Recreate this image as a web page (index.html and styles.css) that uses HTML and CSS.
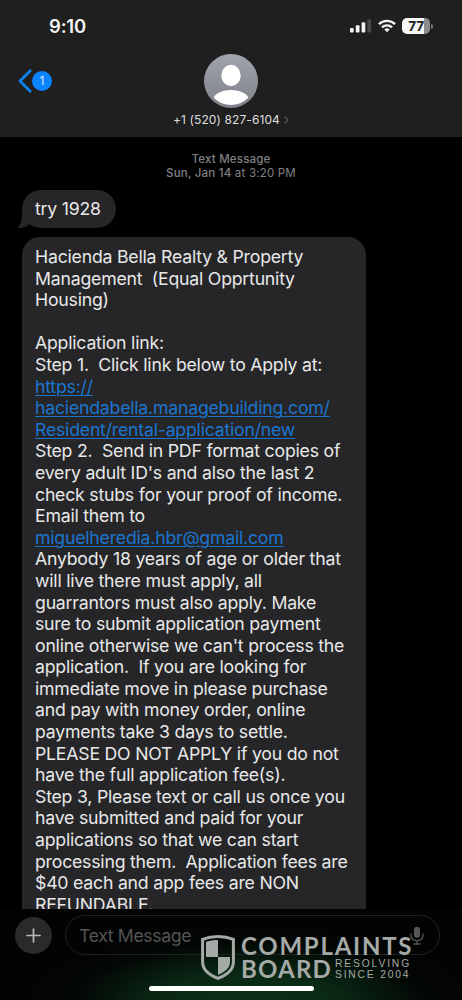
FILE: index.html
```html
<!DOCTYPE html>
<html lang="en">
<head>
<meta charset="utf-8">
<title>Messages</title>
<link rel="stylesheet" href="styles.css">
</head>
<body>
<main class="phone">
  <header class="header">
    <div class="status">
      <span class="time">9:10</span>
      <div class="indicators">
        <svg class="signal" width="21" height="14" viewBox="0 0 21 14"><rect x="0" y="9" width="3.7" height="4.6" rx="1" fill="#f4f4f4"/><rect x="5.8" y="6.2" width="3.7" height="7.4" rx="1" fill="#f4f4f4"/><rect x="11.6" y="3.2" width="3.7" height="10.4" rx="1" fill="#f4f4f4"/><rect x="17.3" y="0.3" width="3.7" height="13.3" rx="1" fill="#484848"/></svg>
        <svg class="wifi" width="18" height="14" viewBox="0 0 19 14" fill="none" stroke="#f4f4f4" stroke-width="2.5"><path d="M1 5.1a12.1 12.1 0 0 1 17 0"/><path d="M4.2 8.5a7.5 7.5 0 0 1 10.6 0"/><path d="M9.5 13.6 6.7 10.7a4 4 0 0 1 5.6 0z" fill="#f4f4f4" stroke="none"/></svg>
        <div class="battery"><span>77</span></div>
        <i class="battery-tip"></i>
      </div>
    </div>
    <div class="contact">
      <div class="back">
        <svg width="14" height="24" viewBox="0 0 14 24" fill="none" stroke="#0d80f2" stroke-width="2.7" stroke-linecap="round" stroke-linejoin="round"><path d="M12.2 1.8 2 12l10.2 10.2"/></svg>
        <span class="badge">1</span>
      </div>
      <div class="person">
        <svg width="54" height="54" viewBox="0 0 54 54"><defs><linearGradient id="g" x1="0" y1="0" x2="0" y2="1"><stop offset="0" stop-color="#a1a3ad"/><stop offset="1" stop-color="#808289"/></linearGradient><clipPath id="c"><circle cx="27" cy="27" r="24"/></clipPath></defs><circle cx="27" cy="27" r="27" fill="url(#g)"/><ellipse cx="27" cy="21.5" rx="9.7" ry="10.7" fill="#fff"/><ellipse cx="27" cy="46" rx="18" ry="10" fill="#fff" clip-path="url(#c)"/></svg>
        <div class="number">+1 (520) 827-6104<svg width="5" height="8" viewBox="0 0 5 8" fill="none" stroke="#606063" stroke-width="1.2"><path d="m.8.6 3.3 3.4L.8 7.4"/></svg></div>
      </div>
    </div>
  </header>
  <section class="thread">
    <div class="stamp"><b>Text Message</b><br><b>Sun, Jan 14</b> at 3:20 PM</div>
    <div class="bubble short">try 1928<svg class="tail" width="18" height="16" viewBox="0 0 18 16"><path d="M5 0C5 8 4 12 0 14.8c5 .7 9-1 12-3.4L18 6z" fill="#262628"/></svg></div>
    <div class="bubble long">Hacienda Bella Realty &amp; Property
Management  (Equal Opprtunity
Housing)

Application link:
Step 1.  Click link below to Apply at:
<a>https://
haciendabella.managebuilding.com/
Resident/rental-application/new</a>
Step 2.  Send in PDF format copies of
every adult ID's and also the last 2
check stubs for your proof of income.
Email them to
<a>miguelheredia.hbr@gmail.com</a>
Anybody 18 years of age or older that
will live there must apply, all
guarrantors must also apply. Make
sure to submit application payment
online otherwise we can't process the
application.  If you are looking for
immediate move in please purchase
and pay with money order, online
payments take 3 days to settle.
PLEASE DO NOT APPLY if you do not
have the full application fee(s).
Step 3, Please text or call us once you
have submitted and paid for your
applications so that we can start
processing them.  Application fees are
$40 each and app fees are NON
REFUNDABLE.</div>
  </section>
  <footer class="composer">
    <div class="row">
      <div class="plus"><svg width="15" height="15" viewBox="0 0 15 15" stroke="#b8b8ba" stroke-width="1.7" stroke-linecap="round"><path d="M7.5 1v13M1 7.5h13"/></svg></div>
      <div class="field"><span>Text Message</span>
        <svg width="14" height="19" viewBox="0 0 14 19" fill="none" stroke="#555657" stroke-width="1.3" stroke-linecap="round"><rect x="4" y=".7" width="6" height="11" rx="3" fill="#555657" stroke="none"/><path d="M1 8v1.5a6 5.3 0 0 0 12 0V8M7 15v3M4 18h6"/></svg>
      </div>
    </div>
    <div class="home"></div>
    <div class="watermark">
      <svg width="34" height="45" viewBox="0 0 34 45" fill="#a5aaa7"><path d="M17 1.600C11.500 1.600 6 2.600 1.600 4.300V27c0 8.500 6.500 13 15.400 16.400C25.900 40 32.400 35.500 32.400 27V4.300C28 2.600 22.500 1.600 17 1.600z" fill="none" stroke="#a5aaa7" stroke-width="3"/><path d="M17 5v17H5V6.800C8.500 5.600 12.500 5 17 5z"/><path d="M17 22h12v5c0 6-5 10-12 12.800z"/></svg>
      <div class="brand">
        <div class="name">COMPLAINTS</div>
        <div class="second"><span class="name board">BOARD</span><span class="tag">RESOLVING<br><span class="since">SINCE 2004</span></span></div>
      </div>
    </div>
  </footer>
</main>
</body>
</html>
```
FILE: styles.css
```css
* { box-sizing: border-box; }
body { margin: 0; background: #000; font-family: Inter, "Liberation Sans", sans-serif; }
svg { display: block; flex: none; }
.phone { width: 462px; height: 1000px; display: flex; flex-direction: column; overflow: hidden; background: #000; color: #eaeaeb; }
.header { flex: none; height: 137px; background: #1f1f1f; }
.status { height: 54px; padding: 17px 29px 0 49px; display: flex; justify-content: space-between; align-items: flex-start; }
.time { font-size: 18.5px; line-height: 19px; font-weight: 600; letter-spacing: -.2px; color: #f4f4f4; }
.indicators { display: flex; align-items: center; height: 18px; }
.wifi { margin-left: 7px; }
.battery { margin-left: 6px; width: 28px; height: 16px; border-radius: 5px; background: linear-gradient(90deg, #f6f6f6 77%, #8c8c8c 77%); color: #222; font-size: 13.5px; font-weight: 700; line-height: 16px; text-align: center; letter-spacing: -.3px; }
.battery-tip { width: 2px; height: 5px; margin-left: 1px; border-radius: 0 2px 2px 0; background: #777; }
.contact { display: grid; grid-template-columns: 100px 1fr 100px; }
.back { display: flex; align-items: center; height: 54px; padding-left: 18px; }
.badge { width: 20px; height: 20px; border-radius: 50%; background: #0a84ff; color: #d8e8fb; font-size: 12px; line-height: 20px; text-align: center; }
.person { display: flex; flex-direction: column; align-items: center; }
.number { display: flex; align-items: center; gap: 4px; margin-top: 4px; font-size: 12px; line-height: 16px; letter-spacing: .1px; color: #dededf; }
.thread { flex: none; height: 772px; padding: 15px 0 0 22px; overflow: hidden; display: flex; flex-direction: column; align-items: flex-start; }
.stamp { flex: none; width: 418px; height: 38px; text-align: center; font-size: 11.5px; line-height: 14px; letter-spacing: .2px; color: #818184; }
.stamp b { font-weight: 500; }
.bubble { flex: none; background: #262628; font-size: 17.7px; line-height: 21.6px; letter-spacing: -.22px; color: #e8e8e9; }
.short { position: relative; width: 94px; height: 38px; padding: 8px 13px; border-radius: 19px; white-space: nowrap; }
.tail { position: absolute; left: -5px; bottom: -1px; }
.long { width: 344px; height: 700px; margin-top: 9px; padding: 9px 0 0 13px; border-radius: 18px; white-space: pre; }
.long a { color: #1b75cf; text-decoration: underline; text-decoration-thickness: 1px; text-underline-offset: 2px; }
.composer { position: relative; flex: none; height: 91px; padding: 6px 22px 0 15px; background: radial-gradient(ellipse 225px 80px at 54% 105%, #0c321b 0%, #0a2815 40%, rgba(3, 12, 6, .5) 78%, transparent 100%), #030303; }
.row { display: flex; align-items: center; gap: 13px; }
.plus { width: 37px; height: 37px; border-radius: 50%; background: #2a2a2c; display: flex; align-items: center; justify-content: center; }
.field { flex: 1; height: 40px; border: 1px solid #202221; border-radius: 20px; padding: 0 15px 0 13px; display: flex; align-items: center; justify-content: space-between; font-size: 17.7px; letter-spacing: -.38px; color: #535455; }
.home { width: 165px; height: 5px; margin: 31px 0 0 133.5px; border-radius: 3px; background: #fff; }
.watermark { position: absolute; left: 201px; top: 26px; display: flex; gap: 6px; color: #a5aaa7; }
.brand { width: 174px; }
.name { font-family: Lato, sans-serif; font-weight: 700; font-size: 24px; line-height: 22.5px; letter-spacing: 1.75px; white-space: nowrap; }
.board { letter-spacing: 1.2px; }
.second { display: flex; gap: 3px; }
.tag { font-family: "Liberation Sans", sans-serif; font-size: 10.3px; line-height: 11px; letter-spacing: 1.85px; white-space: nowrap; }
.since { letter-spacing: 1.8px; }
```
